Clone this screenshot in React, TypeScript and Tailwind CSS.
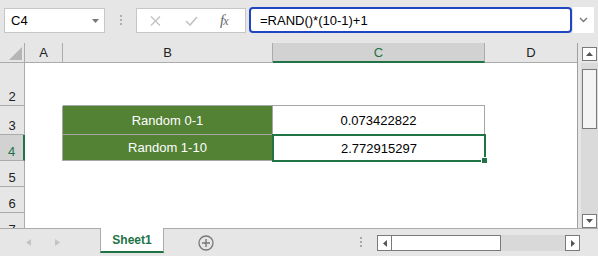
import React from "react";

function RowHeader({ label, selected, h }: { label: string; selected?: boolean; h: number }) {
  return (
    <div
      className={
        "w-[25px] shrink-0 flex items-end justify-center leading-[16px] border-b border-[#ababab] " +
        (selected
          ? "bg-[#d2d2d2] text-[#217346] border-r-2 border-r-[#217346]"
          : "bg-[#e6e6e6] text-[#222] border-r border-r-[#ababab]")
      }
      style={{ height: h }}
    >
      {label}
    </div>
  );
}

export default function App() {
  return (
    <div className="w-[598px] h-[256px] overflow-hidden bg-[#e6e6e6] flex flex-col font-['Liberation_Sans',Arial,sans-serif] text-[13px] text-black select-none">
      {/* Formula bar */}
      <div className="h-[43px] shrink-0 flex items-start pl-[4px] pt-[8px]">
        <div className="w-[101px] h-[25px] bg-white border border-[#c6c6c6] flex items-center justify-between pl-[6px] pr-[5px]">
          <span className="leading-none">C4</span>
          <svg width="7" height="4" viewBox="0 0 7 4">
            <path d="M0 0H7L3.5 4Z" fill="#777" />
          </svg>
        </div>
        <div className="ml-[15px] mt-[7px] flex flex-col gap-[2px]">
          <div className="w-[2px] h-[2px] bg-[#b0b0b0]" />
          <div className="w-[2px] h-[2px] bg-[#b0b0b0]" />
          <div className="w-[2px] h-[2px] bg-[#b0b0b0]" />
        </div>
        <div className="ml-[14px] w-[110px] h-[25px] bg-white border border-[#c6c6c6] flex items-center pl-[13px]">
          <svg width="11" height="10" viewBox="0 0 11 10">
            <path d="M1 0.5L10 9.5M10 0.5L1 9.5" stroke="#c2c2c2" strokeWidth="1.3" />
          </svg>
          <svg className="ml-[24px]" width="13" height="10" viewBox="0 0 13 10">
            <path d="M1 5L5 9L12 1" stroke="#c2c2c2" strokeWidth="1.6" fill="none" />
          </svg>
          <span className="ml-[22px] font-['Liberation_Serif',serif] italic text-[15px] text-[#666] leading-none tracking-[-1px]">
            f<span className="text-[12px]">x</span>
          </span>
        </div>
        <div className="ml-[3px] -mt-[1px] w-[323px] h-[26px] bg-white border-2 border-[#1f45c2] rounded-[4px] flex items-center pl-[9px]">
          <span className="leading-none">=RAND()*(10-1)+1</span>
        </div>
        <div className="ml-[1px] -mt-[1px] w-[21px] h-[26px] bg-white flex items-center justify-center">
          <svg width="9" height="6" viewBox="0 0 9 6">
            <path d="M1 1L4.5 4.5L8 1" stroke="#777" strokeWidth="1.4" fill="none" />
          </svg>
        </div>
      </div>

      {/* Sheet area */}
      <div className="h-[185px] shrink-0 flex">
        <div className="w-[578px] shrink-0 flex flex-col border-r border-[#9f9f9f]">
          {/* column headers */}
          <div className="h-[20px] shrink-0 flex bg-[#e6e6e6] text-[#222]">
            <div className="w-[25px] shrink-0 border-r border-b border-[#ababab] flex items-end justify-end pr-[2px] pb-[2px]">
              <svg width="13" height="13" viewBox="0 0 13 13">
                <path d="M13 0V13H0Z" fill="#b5b5b5" />
              </svg>
            </div>
            <div className="w-[38px] shrink-0 border-r border-b border-[#ababab] flex items-center justify-center">A</div>
            <div className="w-[210px] shrink-0 border-r border-b border-[#ababab] flex items-center justify-center">B</div>
            <div className="w-[212px] shrink-0 bg-[#d2d2d2] border-r border-r-[#ababab] border-b-2 border-b-[#217346] text-[#217346] flex items-center justify-center pt-[1px]">C</div>
            <div className="flex-1 border-b border-[#ababab] flex items-center justify-center">D</div>
          </div>

          {/* body */}
          <div className="relative flex-1 flex flex-col bg-white overflow-hidden">
            {/* row 2 */}
            <div className="flex shrink-0">
              <RowHeader label="2" h={43} />
              <div className="w-[38px] shrink-0" />
              <div className="w-[210px] shrink-0 border-b border-[#a6a6a6]" />
              <div className="w-[212px] shrink-0 border-b border-[#a6a6a6]" />
              <div className="flex-1" />
            </div>
            {/* row 3 */}
            <div className="flex shrink-0 h-[29px]">
              <RowHeader label="3" h={29} />
              <div className="w-[38px] shrink-0 border-r border-[#a6a6a6]" />
              <div className="w-[210px] shrink-0 bg-[#548235] text-white border-b border-r border-[#a6a6a6] flex items-center justify-center pt-[2px]">
                Random 0-1
              </div>
              <div className="w-[212px] shrink-0 border-r border-b border-[#a6a6a6] flex items-center justify-center pt-[2px]">
                0.073422822
              </div>
              <div className="flex-1" />
            </div>
            {/* row 4 */}
            <div className="flex shrink-0 h-[26px]">
              <RowHeader label="4" h={26} selected />
              <div className="w-[38px] shrink-0 border-r border-[#a6a6a6]" />
              <div className="w-[210px] shrink-0 bg-[#548235] text-white border-b border-r border-[#a6a6a6] flex items-center justify-center pt-[1px]">
                Random 1-10
              </div>
              <div className="w-[212px] shrink-0 flex items-center justify-center pt-[1px]">2.772915297</div>
              <div className="flex-1" />
            </div>
            <div className="flex shrink-0">
              <RowHeader label="5" h={26} />
            </div>
            <div className="flex shrink-0">
              <RowHeader label="6" h={26} />
            </div>
            <div className="flex shrink-0">
              <RowHeader label="7" h={26} />
            </div>

            {/* selection overlay */}
            <div className="absolute left-[272px] top-[71px] w-[214px] h-[28px] border-2 border-[#217346]" />
            <div className="absolute left-[481px] top-[94px] w-[7px] h-[7px] bg-[#217346] border border-white" />
          </div>
        </div>

        {/* vertical scrollbar */}
        <div className="flex-1 flex flex-col">
          <div className="h-[20px] shrink-0 pl-[4px] pt-[4px]">
            <div className="w-[15px] h-[14px] bg-white border border-[#7a7a7a] flex items-center justify-center">
              <svg width="7" height="4" viewBox="0 0 7 4">
                <path d="M0 4H7L3.5 0Z" fill="#555" />
              </svg>
            </div>
          </div>
          <div className="flex-1 ml-[3px] bg-[#dadada] flex flex-col items-start pl-[1px]">
            <div className="mt-[6px] w-[15px] h-[60px] bg-[#f4f4f4] border border-[#7a7a7a]" />
            <div className="flex-1" />
            <div className="w-[15px] h-[14px] bg-white border border-[#7a7a7a] flex items-center justify-center">
              <svg width="7" height="4" viewBox="0 0 7 4">
                <path d="M0 0H7L3.5 4Z" fill="#555" />
              </svg>
            </div>
          </div>
        </div>
      </div>

      {/* sheet tabs bar */}
      <div className="flex-1 border-t border-[#ababab] flex items-start">
        <svg className="ml-[26px] mt-[10px]" width="5" height="7" viewBox="0 0 5 7">
          <path d="M5 0V7L0 3.5Z" fill="#c4c4c4" />
        </svg>
        <svg className="ml-[24px] mt-[10px]" width="5" height="7" viewBox="0 0 5 7">
          <path d="M0 0V7L5 3.5Z" fill="#c4c4c4" />
        </svg>
        <div className="ml-[40px] -mt-[1px] w-[64px] h-[25px] bg-white border-x border-[#ababab] border-b-2 border-b-[#217346] flex items-center justify-center text-[12px] font-bold text-[#217346] pt-[1px]">
          Sheet1
        </div>
        <svg className="ml-[34px] mt-[6px]" width="16" height="16" viewBox="0 0 16 16">
          <circle cx="8" cy="8" r="7" stroke="#787878" strokeWidth="1.3" fill="none" />
          <path d="M8 4V12M4 8H12" stroke="#787878" strokeWidth="1.4" />
        </svg>
        <div className="ml-[146px] mt-[8px] flex flex-col gap-[2px]">
          <div className="w-[2px] h-[2px] bg-[#a8a8a8]" />
          <div className="w-[2px] h-[2px] bg-[#a8a8a8]" />
          <div className="w-[2px] h-[2px] bg-[#a8a8a8]" />
        </div>
        <div className="ml-[15px] mt-[6px] w-[203px] h-[16px] flex bg-[#d9d9d9]">
          <div className="w-[15px] h-[16px] bg-white border border-[#7a7a7a] flex items-center justify-center">
            <svg width="4" height="7" viewBox="0 0 4 7">
              <path d="M4 0V7L0 3.5Z" fill="#555" />
            </svg>
          </div>
          <div className="w-[109px] h-[16px] bg-white border border-[#7a7a7a] border-l-0" />
          <div className="flex-1" />
          <div className="w-[15px] h-[16px] bg-white border border-[#7a7a7a] flex items-center justify-center">
            <svg width="4" height="7" viewBox="0 0 4 7">
              <path d="M0 0V7L4 3.5Z" fill="#555" />
            </svg>
          </div>
        </div>
      </div>
    </div>
  );
}
